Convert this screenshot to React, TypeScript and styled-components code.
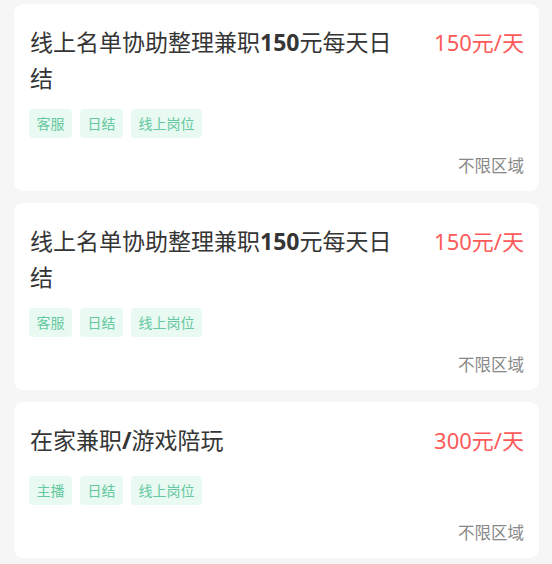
import React from "react";
import styled, { createGlobalStyle } from "styled-components";

const GlobalStyle = createGlobalStyle`
  html, body {
    margin: 0;
    padding: 0;
    background: #f6f6f6;
    font-family: "Noto Sans", "Noto Sans CJK SC", sans-serif;
  }
`;

const List = styled.div`
  display: flex;
  flex-direction: column;
  gap: 12px;
  padding: 4px 13px 6px 14px;
`;

const Card = styled.div`
  background: #fff;
  border-radius: 9px;
  padding: 20px 15px 13px 15px;
  display: flex;
  flex-direction: column;
`;

const Header = styled.div`
  display: flex;
  justify-content: space-between;
  align-items: flex-start;
  gap: 24px;
  min-height: 41px;
  padding-left: 1px;
`;

const Title = styled.div`
  font-size: 23px;
  line-height: 36px;
  color: #353535;
  max-width: 375px;
`;

const Latin = styled.span`
  font-weight: 700;
`;

const Price = styled.div`
  font-size: 22px;
  line-height: 36px;
  color: #fd5a5a;
  white-space: nowrap;
`;

const Tags = styled.div`
  display: flex;
  gap: 8px;
  margin-top: 13px;
`;

const Tag = styled.span`
  height: 29px;
  line-height: 29px;
  padding: 0 7.5px;
  border-radius: 4px;
  background: #e8faf2;
  color: #66c8a0;
  font-size: 14px;
`;

const Location = styled.div`
  margin-top: 16px;
  text-align: right;
  font-size: 16.5px;
  line-height: 24px;
  color: #888;
`;

interface Job {
  title: React.ReactNode;
  price: string;
  tags: string[];
}

const jobs: Job[] = [
  {
    title: (
      <>
        线上名单协助整理兼职<Latin>150</Latin>元每天日结
      </>
    ),
    price: "150元/天",
    tags: ["客服", "日结", "线上岗位"],
  },
  {
    title: (
      <>
        线上名单协助整理兼职<Latin>150</Latin>元每天日结
      </>
    ),
    price: "150元/天",
    tags: ["客服", "日结", "线上岗位"],
  },
  {
    title: (
      <>
        在家兼职<Latin>/</Latin>游戏陪玩
      </>
    ),
    price: "300元/天",
    tags: ["主播", "日结", "线上岗位"],
  },
];

const App: React.FC = () => (
  <>
    <GlobalStyle />
    <List>
      {jobs.map((job, i) => (
        <Card key={i}>
          <Header>
            <Title>{job.title}</Title>
            <Price>{job.price}</Price>
          </Header>
          <Tags>
            {job.tags.map((t) => (
              <Tag key={t}>{t}</Tag>
            ))}
          </Tags>
          <Location>不限区域</Location>
        </Card>
      ))}
    </List>
  </>
);

export default App;
